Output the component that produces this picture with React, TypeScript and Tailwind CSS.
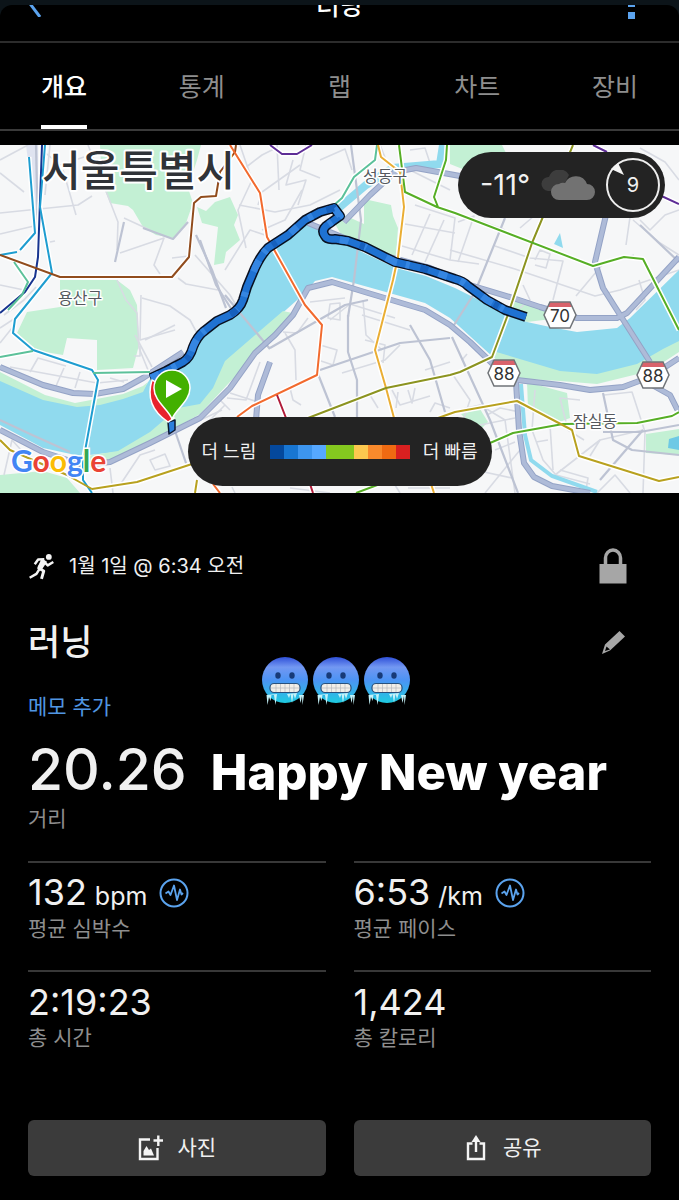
import React from 'react';

const tabs = ['개요', '통계', '랩', '차트', '장비'];

const paceColors = [
  '#04489c', '#1876d2', '#3d95ee', '#56a8ff', '#84c81f',
  '#84c81f', '#fcc84f', '#f98a2c', '#ef6a12', '#d82020',
];

const stats = [
  { value: '132', unit: 'bpm', label: '평균 심박수', graph: true },
  { value: '6:53', unit: '/km', label: '평균 페이스', graph: true },
  { value: '2:19:23', unit: '', label: '총 시간', graph: false },
  { value: '1,424', unit: '', label: '총 칼로리', graph: false },
];

const parks = [
  'M100 145L201 145L197 160L188 188L193 203L186 223L173 238L156 235L143 227L133 210L128 206L110 203L102 183Z',
  'M197 207L206 211L215 202L230 197L238 215L234 225L240 240L226 252L224 263L214 265L218 227L202 223Z',
  'M60 280L117 280L130 290L137 305L139 345L133 368L97 370L97 340L67 338L63 355L33 350L17 333L27 312L60 307Z',
  'M335 224L342 214L364 224L364 199L391 205L393 216L398 228L396 256L380 252L362 244L342 236Z',
  'M0 475L43 471L67 478L80 493L0 493Z',
  'M527 382L567 393L570 418L557 423L528 408Z',
  'M450 145L502 145L506 153L470 172L450 164Z',
  'M461 414L480 409L488 422L478 432Z',
  'M646 434L679 429L679 455L646 453Z',
  'M513 299L540 306L560 318L527 322L508 312Z',
];

// pale strips along the river banks
const banks = [
  'M0 372L45 395L75 403L123 394L143 386L148 382L143 392L123 399L100 405L77 407L43 400L0 381Z',
  'M283 311L225 361L213 388L200 404L178 408L150 432L118 451L80 457L90 463L120 458L153 441L200 414L228 384L297 314Z',
  'M493 351L560 371L597 374L637 364L663 349L679 341L679 352L650 371L597 384L560 381L512 378L497 365Z',
];

const river =
  'M0 378L20 386L50 400L77 405L100 403L123 395L143 390L152 376L183 362L193 347L203 332L230 315L243 300L248 285L256 268L268 248L288 235L306 224L320 228L325 240L350 246L366 254L396 268L426 276L455 288L487 304L505 314L527 322L550 327L577 332L617 328L630 318L679 270' +
  'L679 345L663 352L637 366L597 378L560 377L520 370L493 357L450 318L425 303L368 287L332 277L315 281L305 293L278 317L226 365L213 391L200 407L177 412L143 442L117 452L80 456L43 448L0 425Z';

const highways = [
  'M0 367L43 385L73 393L95 394L123 389L143 378L183 352',
  'M0 430L43 452L83 465L110 462L150 443L200 418L230 388L255 353L275 335L293 315L308 288L332 282L368 293L425 310L450 325L470 342L497 368L517 380L560 385L590 390L623 387L650 377L679 358',
  'M308 223L342 237L382 255L430 268L460 282L513 298L540 307L577 318L617 318L627 313L679 257',
  'M606 215L595 262L603 288L622 318L650 362',
  'M516 382L519 430L524 463L534 477L552 486L590 493',
  'M344 222L370 195L395 172L416 168L460 176',
  'M270 362L258 395L256 420',
  'M652 385L670 395L679 413',
];

const minorHighways = [
  'M0 420L30 434L70 452', 'M348 315L348 352L357 380L357 417', 'M36 145L38 240',
  'M196 235L212 270L220 292L226 308', 'M200 240L216 285L232 310',
  'M351 145L361 220L354 280L348 317', 'M452 337L490 420L518 493', 'M318 374L335 417', 'M174 428L187 466',
  'M270 348L345 305L368 300', 'M320 370L400 343L450 338', 'M410 325L430 360L445 412', 'M505 218L475 292L454 325',
  'M124 222L115 262', 'M143 228L173 239L188 222', 'M270 349L225 295', 'M640 225L679 262',
  'M603 432L640 432L679 425', 'M603 393L613 440L632 450L679 455', 'M643 430L600 480',
];

const streets = [
  'M0 213L78 205L92 196', 'M63 170L76 215', 'M0 160L28 145', 'M0 173L24 192', 'M42 150L60 165L84 157',
  'M88 145L104 186L118 222L117 250', 'M120 253L164 238L154 265L160 274', 'M150 230L124 218', 'M172 258L189 256', 'M117 280L126 300L137 313L139 348L148 370',
  'M142 298L170 306L190 320L205 348', 'M141 295L140 340L175 330', 'M195 255L230 295L240 312', 'M178 278L186 284L218 290',
  'M239 205L275 212L310 205L340 190', 'M240 145L252 180L238 210L246 248', 'M245 168L262 155L276 148', 'M277 145L279 190', 'M293 160L286 185L306 180L298 205', 'M306 145L300 170L320 178', 'M320 160L345 149L352 170', 'M262 230L285 220L302 190', 'M225 270L250 230L268 236', 'M258 205L262 192L300 165',
  'M410 170L450 190', 'M415 205L455 218L450 260', 'M405 224L455 233', 'M402 246L450 260L479 264', 'M412 255L430 214', 'M425 262L444 220', 'M380 145L388 165', 'M410 150L425 148L430 163', 'M458 222L474 216L458 262', 'M450 250L515 269L595 296L620 290L679 270',
  'M495 246L530 258L563 261L553 300', 'M478 220L505 230', 'M535 260L540 250L550 254L546 268L535 265', 'M523 285L530 300L520 308', 'M576 296L602 265L634 255', 'M640 220L650 230L665 215L679 210', 'M626 245L630 217L605 200', 'M640 148L665 162L679 180', 'M520 228L534 216',
  'M633 220L660 243L679 255', 'M639 280L645 300L636 310',
  'M0 328L20 315', 'M0 343L12 328', 'M4 315L24 300L36 287', 'M0 285L24 290', 'M50 145L45 195', 'M0 234L34 226', 'M50 242L55 241',
  'M10 367L97 383L128 380', 'M30 372L38 358L66 366', 'M56 386L64 368', 'M75 388L80 372', 'M110 378L124 382',
  'M135 335L152 367', 'M145 340L175 325', 'M140 346L140 356L134 356',
  'M110 468L113 493', 'M120 485L140 455L155 450', 'M150 460L165 454L170 466L155 470Z', 'M190 400L196 422L222 410', 'M218 398L230 410', 'M205 425L225 405',
  'M260 362L246 400L227 398', 'M285 333L295 350L296 380', 'M230 393L258 402', 'M308 318L297 333L283 332', 'M290 388L293 400L301 405', 'M320 345L337 350L333 365L318 360', 'M342 373L385 360L400 345', 'M365 340L385 345L383 363', 'M362 315L410 330', 'M330 320L350 304L395 318', 'M330 304L328 318L340 320L340 303Z', 'M310 302L345 298',
  'M392 390L400 405L430 396', 'M370 395L378 408', 'M398 392L396 408', 'M408 390L412 403L415 388', 'M430 412L435 403L450 408', 'M425 370L450 362', 'M363 300L366 335L382 350',
  'M453 375L470 400L460 430', 'M487 415L500 408L520 412', 'M480 425L515 418', 'M495 450L515 442', 'M462 360L467 354', 'M450 412L480 405L505 420L515 493', 'M475 470L512 478', 'M485 493L520 450',
  'M535 390L532 430L543 460L556 475L590 484', 'M555 475L600 440L643 430', 'M550 425L553 470', 'M580 400L560 398L568 430L584 440', 'M604 395L632 392L645 432L643 493', 'M536 442L548 440', 'M590 456L600 440', 'M560 470L588 478L586 490', 'M597 493L615 475L630 493',
  'M4 475L12 440L30 460', 'M232 487L235 493', 'M290 488L330 493', 'M395 485L400 493', 'M408 488L450 488',
];

const transit = [
  { color: '#17348f', d: 'M42 145L38 257L35 277L25 292L0 313' },
  { color: '#1e9dd0', d: 'M29 157L35 233L20 250M17 252L0 255M45 145L40 207L52 273L15 319L13 333L33 350L92 370L98 380L83 462L83 480L92 493' },
  { color: '#914c1d', d: 'M0 255L60 277L172 277L189 257L194 203L201 197L216 196L220 172L235 152L236 145' },
  { color: '#5cc19a', d: 'M377 145L375 160L354 177L342 198L333 206L305 217M0 357L33 351M93 373L150 372M14 262L28 282L22 295L8 310' },
  { color: '#f26a2e', d: 'M230 145L260 193L267 237L305 305L322 325L317 375L252 406L237 417M213 484L220 493' },
  { color: '#5e2d96', d: 'M270 145L282 154L297 154L312 145M593 145L607 152M655 193L679 204' },
  { color: '#b01c3a', d: 'M277 395L286 418M310 484L313 493' },
  { color: '#eaae34', d: 'M378 145L381 157L400 172L404 207L398 257L393 280L375 350L386 388L394 418M431 484L434 493' },
  { color: '#8c9420', d: 'M573 145L532 243L507 317L492 357L460 372L450 375L386 388L308 418' },
  { color: '#56ae25', d: 'M399 145L405 192L437 207L455 213L593 266L624 257L643 259L679 330M447 145L446 160L434 197L438 207M490 443L513 433L563 424L637 423L672 416L679 412M356 493L380 484' },
  { color: '#b8a11f', d: 'M438 418L455 412L517 401L572 430L579 456L659 481L679 477M0 440L10 450L67 475L92 489L137 482L192 464M195 493L197 480' },
];

const routeRun =
  'M151 378L166 371L183 362Q190 358 193 347Q197 337 203 332L217 321L230 315Q240 309 243 300L247 287L255 268Q261 255 268 248L288 235L305 220L320 212L334 208L340 216L326 226Q321 231 325 236Q327 240 335 239L348 241L365 247L395 262L425 269L455 279Q463 281 468 286L487 300L505 310L526 317';

function Shield({ x, y, n }: { x: number; y: number; n: string }) {
  return (
    <g transform={`translate(${x} ${y})`}>
      <path d="M-10 -13H10L16 0L10 13H-10L-16 0Z" fill="#fff" />
      <path d="M-10 -13H10L12 -8H-12Z" fill="#d9636b" />
      <path d="M-10 -13H10L16 0L10 13H-10L-16 0Z" fill="none" stroke="#707478" strokeWidth="1.5" />
      <text y="7" textAnchor="middle" fontSize="17" fill="#333">{n}</text>
    </g>
  );
}

function RouteMap() {
  return (
    <svg viewBox="0 145 679 348" className="block h-auto w-full" role="img" aria-label="코스 지도">
      <rect y="145" width="679" height="348" fill="#f6f7f8" />
      <g fill="#c3f0d4">
        {parks.map(d => <path key={d} d={d} />)}
      </g>
      <path d="M26 145H38V215H35Z" fill="#dfe3f0" />
      <g fill="none" stroke="#d8dbe3" strokeWidth="1.6" strokeLinejoin="round">
        {streets.map(d => <path key={d} d={d} />)}
      </g>
      <path d={river} fill="#90daee" />
      <g fill="#c3f0d4">
        {banks.map(d => <path key={d} d={d} />)}
      </g>
      {/* streams */}
      <g fill="none" stroke="#90daee">
        <path d="M334 212L366 185L393 168L440 164L443 145" strokeWidth="8" />
        <path d="M521 384L525 435L531 460L552 476L597 492" strokeWidth="4" />
      </g>
      <path d="M560 233L563 248L554 244Z" fill="#90daee" />
      <path d="M669 439L679 436V450L668 448Z" fill="#6dc9e5" />
      <g fill="none" stroke="#bdc3d3" strokeWidth="2.2" strokeLinejoin="round">
        {minorHighways.map(d => <path key={d} d={d} />)}
      </g>
      <g fill="none" strokeLinejoin="round">
        {highways.map(d => <path key={d} d={d} stroke="#94a3c6" strokeWidth="6" />)}
        {highways.map(d => <path key={d} d={d} stroke="#aebbd8" strokeWidth="4" />)}
      </g>
      {/* subway lines */}
      <g fill="none" strokeLinejoin="round">
        {transit.map(t => <path key={t.color} d={t.d} stroke="#fff" strokeWidth="5" />)}
        {transit.map(t => <path key={t.color} d={t.d} stroke={t.color} strokeWidth="2" />)}
      </g>

      <g className="[font-family:'Noto_Sans_CJK_KR',sans-serif]" fill="#55595e" stroke="#fff" strokeWidth="3" paintOrder="stroke" strokeLinejoin="round">
        <text x="42" y="186" fontSize="42" fontWeight="500" fill="#303338" strokeWidth="4">서울특별시</text>
        <text x="363" y="182" fontSize="16">성동구</text>
        <text x="58" y="304" fontSize="16">용산구</text>
        <text x="573" y="427" fontSize="16">잠실동</text>
      </g>
      <Shield x={560} y={315} n="70" />
      <Shield x={504} y={373} n="88" />
      <Shield x={653} y={375} n="88" />

      {/* recorded track */}
      <g fill="none" strokeLinejoin="round">
        <path d="M168 422L175 420L175 430L169 434Z" fill="#2b7fdc" stroke="#0b1830" strokeWidth="1.5" />
        <path d="M150 374L155 390" stroke="#091020" strokeWidth="2" />
        <path d={routeRun} stroke="#091020" strokeWidth="10" />
        <path d={routeRun} stroke="#1f72d2" strokeWidth="7" />
        <path d={routeRun} stroke="#3586e2" strokeWidth="7" strokeDasharray="9 14 5 22 12 9 4 30" />
        <path d={routeRun} stroke="#1560bd" strokeWidth="7" strokeDasharray="0 40 5 60 8 35" />
      </g>
      <path d="M152 380C147 396 150 410 168 422L174 418L160 384Z" fill="#e8232d" stroke="#fff" strokeWidth="1.5" />
      <path d="M172 419C168 409 154 401 154 388A18 18 0 0 1 190 388C190 401 176 409 172 419Z" fill="#43b000" stroke="#fff" strokeWidth="1.5" />
      <path d="M166 380L182 389L166 398Z" fill="#fff" />

      <text x="11" y="472" fontSize="30" fontWeight="700" className="[font-family:Lato,sans-serif]" stroke="#fff" strokeWidth="3" paintOrder="stroke">
        <tspan fill="#4285f4">G</tspan>
        <tspan fill="#ea4335">o</tspan>
        <tspan fill="#fbbc05">o</tspan>
        <tspan fill="#4285f4">g</tspan>
        <tspan fill="#34a853">l</tspan>
        <tspan fill="#ea4335">e</tspan>
      </text>
    </svg>
  );
}

function ColdFace() {
  return (
    <svg viewBox="0 0 46 48" className="h-12 w-[46px]" aria-hidden="true">
      <defs>
        <linearGradient id="cold" x1="0" y1="0" x2="0" y2="1">
          <stop offset="0" stopColor="#2f50d8" />
          <stop offset="0.22" stopColor="#7398f2" />
          <stop offset="0.5" stopColor="#4c93f4" />
          <stop offset="1" stopColor="#1ecbe0" />
        </linearGradient>
      </defs>
      <circle cx="23" cy="23" r="23" fill="url(#cold)" />
      <ellipse cx="16" cy="18.500" rx="2.700" ry="3.300" fill="#173a78" />
      <ellipse cx="30" cy="18.500" rx="2.700" ry="3.300" fill="#173a78" />
      <rect x="8" y="26.500" width="30" height="9" rx="4" fill="#f1eee8" stroke="#28507c" strokeWidth="1.200" />
      <path d="M9 31H37M14 27V35M18.500 27V35M23 27V35M27.500 27V35M32 27V35" stroke="#b4b8bb" strokeWidth="0.700" />
      <path d="M4.500 38L5.500 48L7 40L8.500 44L9.500 38L12 38L13.500 48L15 37ZM25 37L27 41L28.500 37L30 46L31.500 37L33 42L35 36ZM37 38L38.500 46L40 39L40.500 48L42 38Z" fill="#c4f1f8" />
    </svg>
  );
}

function GraphIcon() {
  return (
    <svg viewBox="0 0 30 30" className="size-[30px]" fill="none" stroke="#5ba3ee" aria-hidden="true">
      <circle cx="15" cy="15" r="13.500" strokeWidth="2" />
      <path d="M6.500 15.500L9.500 13.500L11.500 17L15 7.500L18 22L21 11.500L22.500 16.500L24 15" strokeWidth="1.800" strokeLinejoin="round" />
    </svg>
  );
}

export default function App() {
  return (
    <div className="min-h-screen bg-[#0c1419] pt-[5px] text-[#f0f0f0] [font-family:Inter,'Noto_Sans_CJK_KR',sans-serif]">
      <div className="overflow-hidden rounded-t-xl bg-black">
        {/* title bar, scrolled mostly out of view */}
        <header className="flex h-[38px] items-start justify-between overflow-hidden border-b-2 border-[#2c2c2c] px-5">
          <button aria-label="뒤로" className="-mt-4 w-8">
            <svg viewBox="0 0 32 28" className="h-7 w-8" fill="none" stroke="#5ba3ee" strokeWidth="3">
              <path d="M20 28L8 12" />
            </svg>
          </button>
          <h1 className="-mt-[17px] text-[25px] leading-9 font-medium text-white">러닝</h1>
          <button aria-label="더보기" className="-mt-4 w-8">
            <svg viewBox="0 0 32 30" className="h-[30px] w-8" fill="#5ba3ee">
              <path d="M1 0h7v6h-7zM1 11h7v7h-7zM1 23h7v7h-7z" />
            </svg>
          </button>
        </header>

        <nav className="flex h-[88px] justify-between border-b-2 border-[#3a3a3a] px-[41px]">
          {tabs.map((tab, i) => (
            <button
              key={tab}
              className={`w-[46px] border-b-4 pt-1.5 text-center text-[25px] leading-9 whitespace-nowrap ${
                i === 0 ? 'border-white font-medium text-white' : 'border-transparent text-[#8e8e8e]'
              }`}
            >
              {tab}
            </button>
          ))}
        </nav>

        <section className="relative mt-[14px]">
          <RouteMap />
          <div className="absolute top-[7px] right-[14px] flex h-[66px] w-[207px] items-center justify-between rounded-full bg-[#232323] pr-1 pl-[22px]">
            <span className="text-[29px] leading-9">-11°</span>
            <svg viewBox="0 0 54 30" className="h-[30px] w-[54px]" aria-hidden="true">
              <path d="M7 21A7 7 0 0 1 8 7A11 11 0 0 1 28 5L20 21Z" fill="#3d3d3d" />
              <path d="M18 30A8 8 0 0 1 18 14A7 7 0 0 1 24 13A12 12 0 0 1 46 14A8 8 0 0 1 46 30Z" fill="#727272" />
            </svg>
            <div className="relative flex size-[56px] items-center justify-center text-xl">
              <svg viewBox="0 0 56 56" className="absolute inset-0" aria-hidden="true">
                <circle cx="28" cy="28" r="26" fill="none" stroke="#eee" strokeWidth="2" />
                <path d="M6 12L13 6L19 18Z" fill="#f4f4f4" />
              </svg>
              9
            </div>
          </div>
          <div className="absolute bottom-[7px] left-1/2 flex h-[69px] w-[304px] -translate-x-1/2 items-center justify-between rounded-full bg-[#232323] px-[14px] text-lg">
            <span>더 느림</span>
            <div className="flex h-[14px]">
              {paceColors.map((c, i) => (
                <span key={i} className="w-[14px]" style={{ background: c }} />
              ))}
            </div>
            <span>더 빠름</span>
          </div>
        </section>

        <main className="relative px-7 pt-[55px] pb-6">
          <div className="flex h-9 items-center">
            <svg viewBox="0 0 24 24" className="mr-[14px] size-[27px]" fill="none" stroke="#f4f4f4" aria-hidden="true">
              <circle cx="18.500" cy="3.500" r="2.600" fill="#f4f4f4" stroke="none" />
              <path d="M13 6L9.500 13.500L14 16L12 23" strokeWidth="2.600" strokeLinejoin="round" />
              <path d="M15 6.500L10.500 13.500" strokeWidth="4.500" />
              <path d="M14.500 5.500L9 5.800L6 10M15 8.500L17.500 11L22.500 8M10 14.500L7.500 18.500L1.500 22" strokeWidth="2.200" strokeLinejoin="round" />
            </svg>
            <span className="text-xl leading-7">1월 1일 @ 6:34 오전</span>
            <svg viewBox="0 0 28 36" className="mr-6 ml-auto h-9 w-7" aria-label="비공개">
              <path d="M6.500 18V10A7.500 8 0 0 1 21.500 10V18" fill="none" stroke="#a6a6a6" strokeWidth="3.500" />
              <path d="M0.500 16H27.500V35.500H0.500Z" fill="#a6a6a6" />
            </svg>
          </div>

          <div className="mt-8 flex h-[52px] items-center justify-between">
            <h2 className="text-[35px] leading-[52px] font-medium">러닝</h2>
            <button aria-label="이름 편집" className="mr-6">
              <svg viewBox="0 0 28 28" className="size-7" fill="#a6a6a6">
                <path fillRule="evenodd" d="M3 26L6 16.500L20.500 3L26 8.500L11 22.500ZM7.500 18.500L6 23L11 21.500Z" />
              </svg>
            </button>
          </div>

          <a href="#memo" className="mt-[25px] inline-block text-[21px] leading-7 text-[#5096e2]">메모 추가</a>

          <div className="absolute top-[164px] left-[262px] flex gap-[5px]" role="img" aria-label="추운 얼굴">
            <ColdFace />
            <ColdFace />
            <ColdFace />
          </div>

          <div className="mt-4 flex h-[68px] items-baseline gap-6 whitespace-nowrap">
            <span className="text-[57px] leading-[66px] font-medium">20.26</span>
            <span className="text-[49px] leading-[60px] font-extrabold text-white">Happy New year</span>
          </div>
          <div className="text-[21px] leading-7 text-[#8e8e8e]">거리</div>

          <dl className="mt-7 grid grid-cols-2 gap-x-7">
            {stats.map(s => (
              <div key={s.label} className="flex h-[109px] flex-col-reverse justify-end border-t-2 border-[#383838] pt-2">
                <dt className="text-[21px] leading-7 text-[#8e8e8e]">{s.label}</dt>
                <dd className="flex h-11 items-center gap-3">
                  <span className="flex items-baseline gap-2">
                    <span className="text-[36px] leading-11">{s.value}</span>
                    {s.unit && <span className="text-[25px]">{s.unit}</span>}
                  </span>
                  {s.graph && <GraphIcon />}
                </dd>
              </div>
            ))}
          </dl>

          <div className="mt-[41px] grid grid-cols-2 gap-7">
            <button className="flex h-[56px] items-center justify-center gap-[14px] rounded-md bg-[#3b3b3b] text-[21px]">
              <svg viewBox="0 0 26 26" className="size-[26px]" fill="none" stroke="#f4f4f4" strokeWidth="2.400" aria-hidden="true">
                <path d="M13 4.500H3V24H20.500V13M16.500 5.500H26M21.300 0.500V11" />
                <path d="M6.500 20.500V16L9.500 11L12 15L14 13.500L17 20.500Z" fill="#f4f4f4" stroke="none" />
              </svg>
              사진
            </button>
            <button className="flex h-[56px] items-center justify-center gap-[14px] rounded-md bg-[#3b3b3b] text-[21px]">
              <svg viewBox="0 0 26 26" className="size-[26px]" fill="none" stroke="#f4f4f4" strokeWidth="2.400" aria-hidden="true">
                <path d="M9.500 8.500H5V24H21V8.500H16.500M13 17V3" />
                <path d="M8.500 7L13 0L17.500 7Z" fill="#f4f4f4" stroke="none" />
              </svg>
              공유
            </button>
          </div>
        </main>
      </div>
    </div>
  );
}
